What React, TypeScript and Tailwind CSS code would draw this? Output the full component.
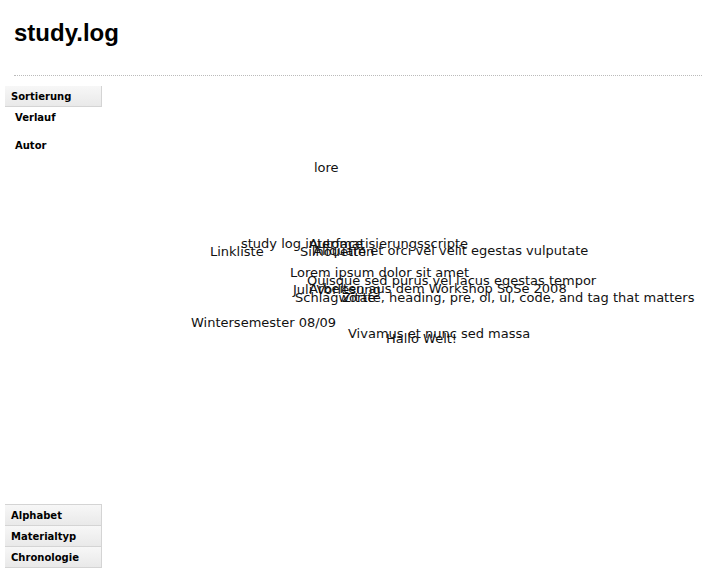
import React from 'react';

type Label = { text: string; x: number; y: number };

// tag positions on the free canvas (page coords, y = text middle)
const labels: Label[] = [
  { text: 'lore', x: 314, y: 168 },
  { text: 'study log interface', x: 241, y: 244 },
  { text: 'Automatisierungsscripte', x: 309, y: 244 },
  { text: 'Linkliste', x: 210, y: 252 },
  { text: 'Silhouetten', x: 300, y: 252 },
  { text: 'Aliquam et orci vel velit egestas vulputate', x: 313, y: 251 },
  { text: 'Lorem ipsum dolor sit amet', x: 290, y: 273 },
  { text: 'Quisque sed purus vel lacus egestas tempor', x: 307, y: 281 },
  { text: 'Juli Vorlesung', x: 293, y: 290 },
  { text: 'Arbeiten aus dem Workshop SoSe 2008', x: 309, y: 289 },
  { text: 'Schlagworte', x: 295, y: 298 },
  { text: 'Zitate, heading, pre, ol, ul, code, and tag that matters', x: 342, y: 298 },
  { text: 'Wintersemester 08/09', x: 191, y: 323 },
  { text: 'Vivamus et nunc sed massa', x: 348, y: 334 },
  { text: 'Hallo Welt!', x: 386, y: 339 },
];

// top-left of the canvas area on the page
const CANVAS_X = 102;
const CANVAS_Y = 76;

const Tab: React.FC<{ label: string }> = ({ label }) => (
  <div className="h-[21px] flex items-center pl-[6px] bg-gradient-to-b from-[#f7f7f7] to-[#e9e9e9] border-b border-r border-[#d4d4d4] text-[10px] font-bold text-black">
    {label}
  </div>
);

export default function App() {
  return (
    <div className="w-full h-[584px] bg-white flex flex-col overflow-hidden" style={{ fontFamily: '"DejaVu Sans", Verdana, sans-serif' }}>
      <header className="h-[75px] pl-[14px] pt-[18px] shrink-0">
        <h1 className="text-[24px] font-bold text-black leading-[30px]" style={{ fontFamily: '"Liberation Sans", Arial, sans-serif' }}>
          study.log
        </h1>
      </header>
      <div className="ml-[14px] border-t border-dotted border-[#bbbbbb] shrink-0" />

      <div className="flex flex-1 min-h-0">
        <aside className="w-[97px] ml-[5px] pt-[10px] pb-[16px] flex flex-col justify-between shrink-0">
          <div>
            <Tab label="Sortierung" />
            <div className="pl-[10px] pt-[4px] text-[10px] font-bold text-black">
              <div className="h-[14px] leading-[14px]">Verlauf</div>
              <div className="h-[14px] leading-[14px] mt-[14px]">Autor</div>
            </div>
          </div>
          <div className="border-t border-[#d4d4d4]">
            <Tab label="Alphabet" />
            <Tab label="Materialtyp" />
            <Tab label="Chronologie" />
          </div>
        </aside>

        <main className="relative flex-1">
          {labels.map((l) => (
            <span
              key={l.text}
              className="absolute whitespace-nowrap text-[13px] leading-[16px] text-[#111]"
              style={{ left: l.x - CANVAS_X, top: l.y - CANVAS_Y - 8 }}
            >
              {l.text}
            </span>
          ))}
        </main>
      </div>
    </div>
  );
}
